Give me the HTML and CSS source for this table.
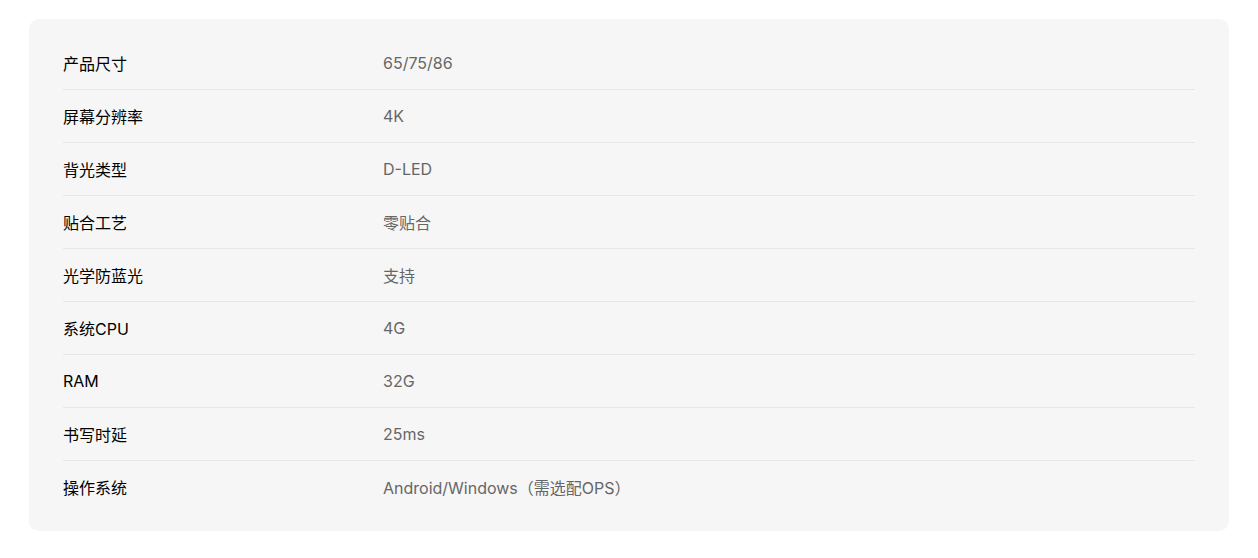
FILE: index.html
```html
<!DOCTYPE html>
<html lang="zh-CN">
<head>
  <meta charset="UTF-8" />
  <meta name="viewport" content="width=device-width, initial-scale=1.0"/>
  <title>产品参数</title>
  <link rel="stylesheet" href="styles.css">
</head>
<body>
  <div class="spec-card">
    <div class="spec-row"><span class="spec-label">产品尺寸</span><span class="spec-value">65/75/86</span></div>
    <div class="spec-row"><span class="spec-label">屏幕分辨率</span><span class="spec-value">4K</span></div>
    <div class="spec-row"><span class="spec-label">背光类型</span><span class="spec-value">D-LED</span></div>
    <div class="spec-row"><span class="spec-label">贴合工艺</span><span class="spec-value">零贴合</span></div>
    <div class="spec-row"><span class="spec-label">光学防蓝光</span><span class="spec-value">支持</span></div>
    <div class="spec-row"><span class="spec-label">系统CPU</span><span class="spec-value">4G</span></div>
    <div class="spec-row"><span class="spec-label">RAM</span><span class="spec-value">32G</span></div>
    <div class="spec-row"><span class="spec-label">书写时延</span><span class="spec-value">25ms</span></div>
    <div class="spec-row"><span class="spec-label">操作系统</span><span class="spec-value">Android/Windows（需选配OPS）</span></div>
  </div>
</body>
</html>
```

FILE: styles.css
```css
body {
  margin: 0;
  padding: 19px 29px 27px;
  background: #ffffff;
  font-family: Inter, "Noto Sans CJK SC", sans-serif;
}

.spec-card {
  background-color: #f6f6f6;
  border-radius: 10px;
  padding: 18px 34px 18px;
}

.spec-row {
  display: flex;
  align-items: center;
  height: 52px;
  border-bottom: 1px solid #e6e6e6;
  font-size: 16px;
}

.spec-row:last-child {
  border-bottom: none;
}

.spec-label {
  width: 320px;
  flex-shrink: 0;
  color: #000;
}

.spec-value {
  color: #666;
}
```
